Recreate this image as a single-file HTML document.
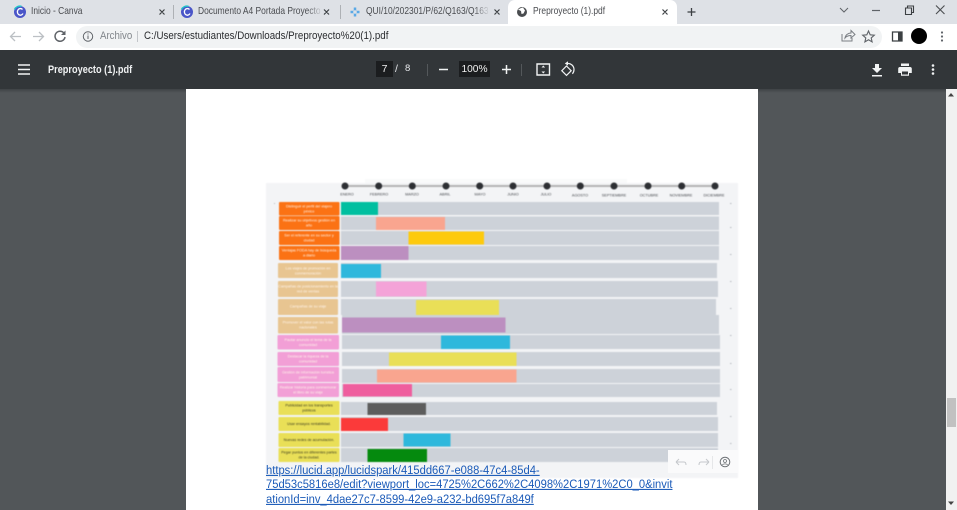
<!DOCTYPE html>
<html lang="es"><head><meta charset="utf-8"><title>Preproyecto (1).pdf</title>
<style>
html,body{margin:0;padding:0;width:957px;height:510px;overflow:hidden;background:#525659;font-family:"Liberation Sans",sans-serif}
div,a,span{position:absolute;white-space:nowrap}
svg{position:absolute;left:0;top:0;overflow:visible}
.t{font-size:10.4px;color:#4a4c50;top:5px;line-height:14px;transform:scaleX(.81);transform-origin:0 0;filter:blur(.2px)}
.fade{width:16px;top:3px;height:18px;background:linear-gradient(90deg,rgba(222,225,230,0),#dee1e6)}
.lnk{left:266px;font-size:11.2px;line-height:14px;color:#1a5ab8;text-decoration:underline;transform:scaleY(1.08);transform-origin:0 0;filter:blur(.25px)}
</style></head><body>
<div style="left:0;top:0;width:957px;height:24px;background:#dee1e6"></div>
<div style="left:508px;top:0;width:169px;height:24px;background:#fff;border-radius:7px 7px 0 0"></div>
<div style="left:0;top:24px;width:957px;height:26px;background:#fff"></div>
<div style="left:76px;top:26px;width:806px;height:22px;border-radius:11px;background:#f1f3f4"></div>
<div style="left:0;top:50px;width:957px;height:39px;background:#323639"></div>
<div style="left:0;top:89px;width:946px;height:4px;background:linear-gradient(#3e4245,#525659)"></div>

<div class="t" style="left:31px">Inicio - Canva</div>
<div class="t" style="left:198px;width:151px;overflow:hidden">Documento A4 Portada Proyecto</div><div class="fade" style="left:307px"></div>
<div class="t" style="left:366px;width:151px;overflow:hidden">QUI/10/202301/P/62/Q163/Q163</div><div class="fade" style="left:474px"></div>
<div class="t" style="left:533px">Preproyecto (1).pdf</div>

<div style="left:100px;top:29px;font-size:11.2px;line-height:14px;color:#80858a;transform:scaleX(.865);transform-origin:0 0;filter:blur(.2px)">Archivo</div>
<div style="left:144px;top:29px;font-size:11.4px;line-height:14px;color:#2b2d30;transform:scaleX(.856);transform-origin:0 0;filter:blur(.2px)">C:/Users/estudiantes/Downloads/Preproyecto%20(1).pdf</div>
<div style="left:48px;top:62.500px;font-size:11px;line-height:14px;font-weight:bold;color:#f1f3f4;transform:scaleX(.835);transform-origin:0 0;filter:blur(.2px)">Preproyecto (1).pdf</div>

<div style="left:376px;top:61px;width:17px;height:16px;background:#1b1d1f"></div>
<div style="left:376px;top:62px;width:17px;text-align:center;font-size:10.5px;line-height:14px;color:#eee">7</div>
<div style="left:395px;top:62px;font-size:10.5px;line-height:14px;color:#e8eaed">/</div>
<div style="left:405px;top:62px;font-size:9.5px;line-height:14px;color:#e8eaed">8</div>
<div style="left:459px;top:61px;width:31px;height:16px;background:#1b1d1f"></div>
<div style="left:459px;top:63px;width:31px;text-align:center;font-size:10.2px;line-height:14px;color:#f1f1f1">100%</div>

<svg width="957" height="90" viewBox="0 0 957 90" fill="none">
<circle cx="20" cy="12" r="6" fill="#4a55c8"/><path d="M14.500 9.500a6 6 0 0 1 7-3.200" stroke="#22c3c9" stroke-width="1.500"/><path d="M22.500 9.500a3 3.300 0 1 0 .5 4" stroke="#fff" stroke-width="1.300"/>
<circle cx="187" cy="12" r="6" fill="#4a55c8"/><path d="M181.500 9.500a6 6 0 0 1 7-3.200" stroke="#22c3c9" stroke-width="1.500"/><path d="M189.500 9.500a3 3.300 0 1 0 .5 4" stroke="#fff" stroke-width="1.300"/>
<path d="M355 7.500v9M350.500 12h9" stroke="#5aa9e6" stroke-width="2.500"/><circle cx="355" cy="12" r="1.800" fill="#dee1e6"/>
<circle cx="522" cy="12" r="5" fill="#4a4d50"/><path d="M518 9.500l3 1.500.500 3 2-.5 1.500-3-2-3-2 .5z" fill="#fff"/>
<path d="M159.500 9.500l5 5M164.500 9.500l-5 5M324 9.500l5 5M329 9.500l-5 5M494.500 9.500l5 5M499.500 9.500l-5 5M662.500 9.500l5 5M667.500 9.500l-5 5" stroke="#3c4043" stroke-width="1.200"/>
<path d="M173.500 5v14M340.500 5v14" stroke="#aeb1b5"/>
<path d="M691.500 8v8M687.500 12h8" stroke="#3c4043" stroke-width="1.300"/>
<path d="M840 8l4 4 4-4" stroke="#5f6368"/><path d="M872 10.500h8" stroke="#5f6368" stroke-width="1.200"/>
<path d="M905.500 8h6v6.500h-6zM907.500 8V6h6v6.500h-2" stroke="#3c4043" stroke-width="1.100"/>
<path d="M936 5.500l8.500 8.500M944.500 5.500l-8.500 8.500" stroke="#4a4d50" stroke-width="1.100"/>
<path d="M21 36.500H10.500M15 32l-4.500 4.500 4.500 4.500" stroke="#bcc0c4" stroke-width="1.300"/><path d="M33 36.500h10.500M39 32l4.500 4.500-4.500 4.500" stroke="#bcc0c4" stroke-width="1.300"/>
<path d="M64 33.200A5 5 0 1 0 65 37" stroke="#5f6368" stroke-width="1.500"/><path d="M65.500 30.500v4.500H61z" fill="#5f6368"/>
<circle cx="88" cy="36.500" r="4.700" stroke="#5f6368"/><path d="M88 35.500v3.500M88 33.500v1" stroke="#5f6368"/>
<path d="M137.500 31v11" stroke="#c2c5c9"/>
<path d="M842 34v7h10v-3M845 38c.5-3 3-5 6-5v-2.500l4 4-4 3.500V35.500c-2.500 0-4.500.7-6 2.500z" stroke="#7b7f84"/>
<path d="M868.500 31l1.700 3.800 4.100.4-3.100 2.700.9 4-3.600-2.100-3.600 2.100.9-4-3.100-2.700 4.100-.4z" stroke="#5f6368" stroke-width="1.100"/>
<path d="M892.500 32h9.500v9h-9.500z" stroke="#3c4043" stroke-width="1.300"/><path d="M898 32h4v9h-4z" fill="#3c4043"/>
<circle cx="919" cy="36" r="8" fill="#000"/>
<circle cx="942" cy="32.500" r="1.100" fill="#5f6368"/><circle cx="942" cy="36.500" r="1.100" fill="#5f6368"/><circle cx="942" cy="40.500" r="1.100" fill="#5f6368"/>
<path d="M18 65h12M18 69.500h12M18 74h12" stroke="#f1f3f4" stroke-width="1.500"/>
<path d="M427.500 64v12M521.500 64v12" stroke="#54585b"/>
<path d="M439 69.500h9M502 69.500h9M506.500 65v9" stroke="#f1f3f4" stroke-width="1.500"/>
<path d="M537 64h12.500v11H537z" stroke="#f1f3f4" stroke-width="1.400"/><path d="M543.300 65.500l-1.800 2h3.600zM543.300 73.500l-1.800-2h3.600z" fill="#f1f3f4"/>
<path d="M566.500 66l4.700 4.700-4.700 4.700-4.700-4.700z" stroke="#f1f3f4" stroke-width="1.200"/><path d="M567 63.500c4-.5 7 2.500 7 6 0 1.700-.6 3.200-1.600 4.300" stroke="#f1f3f4" stroke-width="1.200"/><path d="M568 61.300l-3.200 2.200 3.200 2.100z" fill="#f1f3f4"/>
<path d="M875 64h4v4h3l-5 5-5-5h3zM872 75h10v1.500h-10z" fill="#f1f3f4"/>
<path d="M900 67h10a1.800 1.800 0 0 1 1.800 1.800V73h-2.800v2.800h-8V73h-2.800v-4.200A1.800 1.800 0 0 1 900 67zM901 63.500h8V66h-8z" fill="#f1f3f4"/><path d="M902 71.500h6v3h-6z" fill="#323639"/>
<circle cx="933" cy="65.500" r="1.300" fill="#f1f3f4"/><circle cx="933" cy="69.500" r="1.300" fill="#f1f3f4"/><circle cx="933" cy="73.500" r="1.300" fill="#f1f3f4"/>
</svg>

<div style="left:186px;top:89px;width:572px;height:421px;background:#fff"></div>
<div style="left:946px;top:89px;width:11px;height:421px;background:#f1f1f1"></div>
<div style="left:947px;top:398px;width:9px;height:29px;background:#c1c1c1"></div>
<svg width="957" height="510" viewBox="0 0 957 510"><path d="M951 93l3 3.500h-6zM951 505l3-3.500h-6z" fill="#444"/></svg>

<svg width="957" height="510" viewBox="0 0 957 510" style="filter:blur(.45px)" font-family="Liberation Sans" text-anchor="middle">
<rect x="266" y="183" width="472" height="295" fill="#f3f4f6"/>
<rect x="365" y="179" width="262" height="4" fill="#f9fafa"/>
<path d="M345 186H715" stroke="#b4b4b4" stroke-width="2"/>
<g fill="#2d2f33"><circle cx="345" cy="186" r="3.500"/><circle cx="378.700" cy="186" r="3.500"/><circle cx="412.300" cy="186" r="3.500"/><circle cx="446" cy="186" r="3.500"/><circle cx="479.700" cy="186" r="3.500"/><circle cx="513" cy="186" r="3.500"/><circle cx="547" cy="186" r="3.500"/><circle cx="580.300" cy="186" r="3.500"/><circle cx="614" cy="186" r="3.500"/><circle cx="648" cy="186" r="3.500"/><circle cx="681.700" cy="186" r="3.500"/><circle cx="715" cy="186" r="3.500"/></g>
<g font-size="3.800" fill="#44474c"><text x="347" y="195.500">ENERO</text><text x="379" y="195.500">FEBRERO</text><text x="412" y="195.500">MARZO</text><text x="445" y="195.500">ABRIL</text><text x="480" y="195.500">MAYO</text><text x="513" y="195.500">JUNIO</text><text x="546" y="195.500">JULIO</text><text x="580" y="196.500">AGOSTO</text><text x="614" y="196.500">SEPTIEMBRE</text><text x="649" y="196.500">OCTUBRE</text><text x="681" y="196.500">NOVIEMBRE</text><text x="714" y="196.500">DICIEMBRE</text></g>
<g fill="#cdd2d9">
<rect x="341" y="202" width="378" height="13"/><rect x="341" y="216.500" width="378" height="13.500"/><rect x="341" y="231" width="378" height="14"/><rect x="341" y="246" width="378" height="14"/>
<rect x="341" y="263" width="376" height="15"/><rect x="341" y="281" width="377" height="16"/><rect x="341" y="299" width="375" height="16"/><rect x="342" y="315" width="377" height="19"/>
<rect x="342" y="335" width="378" height="14"/><rect x="342" y="352" width="378" height="14"/><rect x="342" y="369" width="378" height="14"/><rect x="342" y="384" width="378" height="13"/>
<rect x="341" y="402" width="376" height="13"/><rect x="341" y="417" width="377" height="14"/><rect x="341" y="433" width="377" height="14"/><rect x="341" y="448" width="377" height="14"/>
</g>
<rect x="341" y="202" width="37" height="13" fill="#00bfa0"/>
<rect x="376" y="217" width="69" height="13" fill="#f9a58f"/>
<rect x="408.500" y="231.500" width="75.500" height="13" fill="#fdca0d"/>
<rect x="341" y="246" width="67.500" height="14" fill="#bc8fc0"/>
<rect x="341" y="264" width="40" height="14" fill="#2eb8dc"/>
<rect x="376" y="281.500" width="50.500" height="15" fill="#f4a3d8"/>
<rect x="416" y="300" width="83" height="15" fill="#e9df57"/>
<rect x="342" y="317.500" width="163.500" height="15" fill="#bc8fc0"/>
<rect x="441" y="335.500" width="69" height="13.500" fill="#2eb8dc"/>
<rect x="389" y="352.500" width="127.500" height="13.500" fill="#e9df57"/>
<rect x="377" y="369.500" width="139.500" height="13" fill="#f9a58f"/>
<rect x="343" y="384" width="69" height="12.500" fill="#ef5e9e"/>
<rect x="367.500" y="403" width="58.500" height="12" fill="#5d5d5d"/>
<rect x="341" y="418" width="47" height="13" fill="#fb3a3a"/>
<rect x="403.500" y="433.500" width="47" height="13" fill="#2eb8dc"/>
<rect x="367.500" y="449" width="59.500" height="13" fill="#058a0e"/>
<g fill="#fb7214"><rect x="279" y="202" width="60.500" height="13.500" rx="1"/><rect x="279" y="216" width="60.500" height="14" rx="1"/><rect x="279" y="231" width="60.500" height="14" rx="1"/><rect x="279" y="246" width="60.500" height="14" rx="1"/></g>
<g fill="#e8c591"><rect x="278" y="263" width="60" height="15" rx="1"/><rect x="278" y="281" width="60" height="16" rx="1"/><rect x="278" y="299" width="60" height="16" rx="1"/><rect x="278" y="317" width="60" height="16.500" rx="1"/></g>
<g fill="#f29fd6"><rect x="277.500" y="335" width="61.500" height="14.500" rx="1"/><rect x="277.500" y="352" width="61.500" height="14" rx="1"/><rect x="277.500" y="367" width="61.500" height="15" rx="1"/><rect x="277.500" y="383" width="61.500" height="14" rx="1"/></g>
<g fill="#e9df57"><rect x="278.500" y="401" width="61" height="14" rx="1"/><rect x="278.500" y="417" width="61" height="14" rx="1"/><rect x="278.500" y="433" width="61" height="14" rx="1"/><rect x="278.500" y="448" width="61" height="14" rx="1"/></g>
<g font-size="3.700" fill="#fff4ea">
<text x="309" y="207.500">Distinguir el perfil del viajero</text><text x="309" y="212.500">péxico</text>
<text x="309" y="221.500">Realizar su objetivos gestión en</text><text x="309" y="226.500">año</text>
<text x="309" y="236.500">Ser el referente en su sector y</text><text x="309" y="241.500">ciudad</text>
<text x="309" y="251.500">Ventajas FODA hay de búsqueda</text><text x="309" y="256.500">a diario</text>
<text x="308" y="269.500">Los viajes de promoción en</text><text x="308" y="274.500">conmemoración</text>
<text x="308" y="287.500">Campañas de posicionamiento en la</text><text x="308" y="292.500">red de ventas</text>
<text x="308" y="307.500">Campañas de su viaje</text>
<text x="308" y="323.500">Promover el valor con las rutas</text><text x="308" y="328.500">nacionales</text>
<text x="308" y="341">Pautar anuncio el tema de la</text><text x="308" y="346">comunidad</text>
<text x="308" y="357.500">Destacar la riqueza de la</text><text x="308" y="362.500">comunidad</text>
<text x="308" y="373.500">Gestión de información turística</text><text x="308" y="378.500">patrimonial</text>
<text x="308" y="388.500">Realizar historia para conmemorar</text><text x="308" y="393.500">el libro de su viaje</text>
</g>
<g font-size="3.700" fill="#3a3a20">
<text x="309" y="406.500">Publicidad en los transportes</text><text x="309" y="411.500">públicos</text>
<text x="309" y="425">Usar ensayos rentabilidad.</text>
<text x="309" y="441">Nuevas redes de acumulación.</text>
<text x="309" y="453.500">Pegar puntos en diferentes partes</text><text x="309" y="458.500">de la ciudad.</text>
</g>
<g fill="#b5bac0"><rect x="274" y="203" width="1" height="1"/><rect x="730" y="203" width="1.500" height="1"/><rect x="730" y="227" width="1.500" height="1"/><rect x="730" y="254" width="1.500" height="1"/><rect x="730" y="281" width="1.500" height="1"/><rect x="730" y="308" width="1.500" height="1"/><rect x="730" y="335" width="1.500" height="1"/><rect x="730" y="363" width="1.500" height="1"/><rect x="730" y="389" width="1.500" height="1"/><rect x="730" y="416" width="1.500" height="1"/><rect x="730" y="443" width="1.500" height="1"/></g>
</svg>

<div style="left:668px;top:450px;width:70px;height:23px;background:#fafafb"></div>
<svg width="957" height="510" viewBox="0 0 957 510" fill="none">
<path d="M676 462h8c1.500 0 2 1 2 3M676 462l3-3M676 462l3 3M709 462h-8c-1.500 0-2 1-2 3M709 462l-3-3M709 462l-3 3" stroke="#c5c8cc" stroke-width="1"/>
<path d="M712.500 456v13" stroke="#e6e7e9"/>
<circle cx="725" cy="462" r="4.800" stroke="#6f7377"/><circle cx="725" cy="461" r="1.500" stroke="#6f7377" stroke-width=".8"/><path d="M722.500 465c.5-1.500 4.500-1.500 5 0" stroke="#6f7377" stroke-width=".8"/>
</svg>

<a class="lnk" style="top:463px">https://lucid.app/lucidspark/415dd667-e088-47c4-85d4-</a>
<a class="lnk" style="top:477px">75d53c5816e8/edit?viewport_loc=4725%2C662%2C4098%2C1971%2C0_0&amp;invit</a>
<a class="lnk" style="top:492px">ationId=inv_4dae27c7-8599-42e9-a232-bd695f7a849f</a>
</body></html>
